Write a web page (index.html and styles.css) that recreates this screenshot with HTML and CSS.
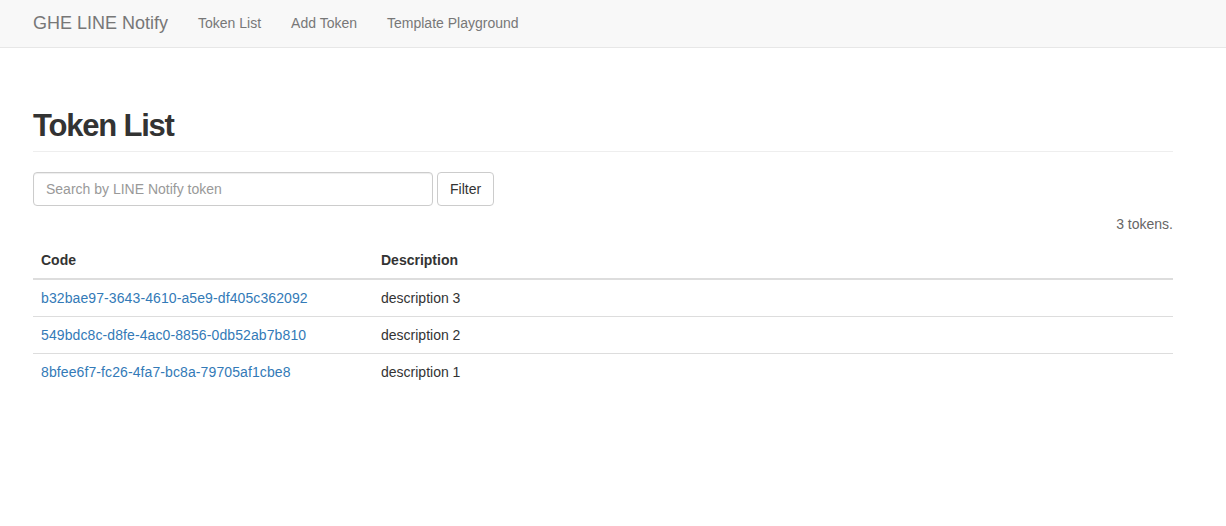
FILE: index.html
```html
<!DOCTYPE html>
<html lang="en">
<head>
<meta charset="utf-8">
<title>GHE LINE Notify</title>
<link rel="stylesheet" href="styles.css">
</head>
<body>
<nav class="navbar">
  <div class="container nav-inner">
    <a class="brand" href="#">GHE LINE Notify</a>
    <ul class="nav-links">
      <li><a href="#">Token List</a></li>
      <li><a href="#">Add Token</a></li>
      <li><a href="#">Template Playground</a></li>
    </ul>
  </div>
</nav>
<main class="container">
  <h1 class="page-header">Token List</h1>
  <form class="filter-form">
    <input class="form-control" type="text" placeholder="Search by LINE Notify token">
    <button class="btn" type="button">Filter</button>
  </form>
  <p class="count">3 tokens.</p>
  <table class="table">
    <thead>
      <tr><th class="col-code">Code</th><th>Description</th></tr>
    </thead>
    <tbody>
      <tr><td><a href="#">b32bae97-3643-4610-a5e9-df405c362092</a></td><td>description 3</td></tr>
      <tr><td><a href="#">549bdc8c-d8fe-4ac0-8856-0db52ab7b810</a></td><td>description 2</td></tr>
      <tr><td><a href="#">8bfee6f7-fc26-4fa7-bc8a-79705af1cbe8</a></td><td>description 1</td></tr>
    </tbody>
  </table>
</main>
</body>
</html>
```
FILE: styles.css
```css
* { box-sizing: border-box; }
html, body { margin: 0; padding: 0; }
body {
  font-family: "Liberation Sans", Arial, sans-serif;
  font-size: 14px;
  line-height: 20px;
  color: #333;
  background: #fff;
}
a { color: #337ab7; text-decoration: none; }

.container {
  width: 1170px;
  margin-left: 18px;
  padding: 0 15px;
}

.navbar {
  height: 48px;
  background: #f8f8f8;
  border-bottom: 1px solid #e7e7e7;
}
.nav-inner {
  display: flex;
  align-items: center;
  height: 45px;
}
.brand {
  color: #777;
  font-size: 18px;
  line-height: 20px;
  padding-right: 15px;
}
.nav-links {
  display: flex;
  list-style: none;
  margin: 0;
  padding: 0;
}
.nav-links a {
  display: block;
  color: #777;
  padding: 0 15px;
  line-height: 20px;
}

.page-header {
  font-size: 31px;
  font-weight: 700;
  letter-spacing: -1.2px;
  line-height: 40px;
  margin: 58px 0 20px;
  padding-bottom: 5px;
  border-bottom: 1px solid #eee;
  color: #333;
}

.filter-form {
  display: flex;
  gap: 4px;
  margin: 0;
}
.form-control {
  width: 400px;
  height: 34px;
  padding: 6px 12px;
  font: inherit;
  color: #555;
  border: 1px solid #ccc;
  border-radius: 4px;
  box-shadow: inset 0 1px 1px rgba(0,0,0,.075);
}
.form-control::placeholder { color: #999; }
.btn {
  height: 34px;
  padding: 6px 12px;
  font: inherit;
  color: #333;
  background: #fff;
  border: 1px solid #ccc;
  border-radius: 4px;
}

.count {
  text-align: right;
  margin: 8px 0 8px;
  color: #666;
}

.table {
  width: 100%;
  border-collapse: collapse;
}
.table th, .table td {
  text-align: left;
  padding: 8px;
  line-height: 20px;
  vertical-align: top;
}
.table th {
  font-weight: 700;
  border-bottom: 2px solid #ddd;
}
.table td { border-top: 1px solid #ddd; }
.table tbody tr:first-child td { border-top: 0; }
.table td a { letter-spacing: 0.1px; }
.col-code { width: 340px; }
```
